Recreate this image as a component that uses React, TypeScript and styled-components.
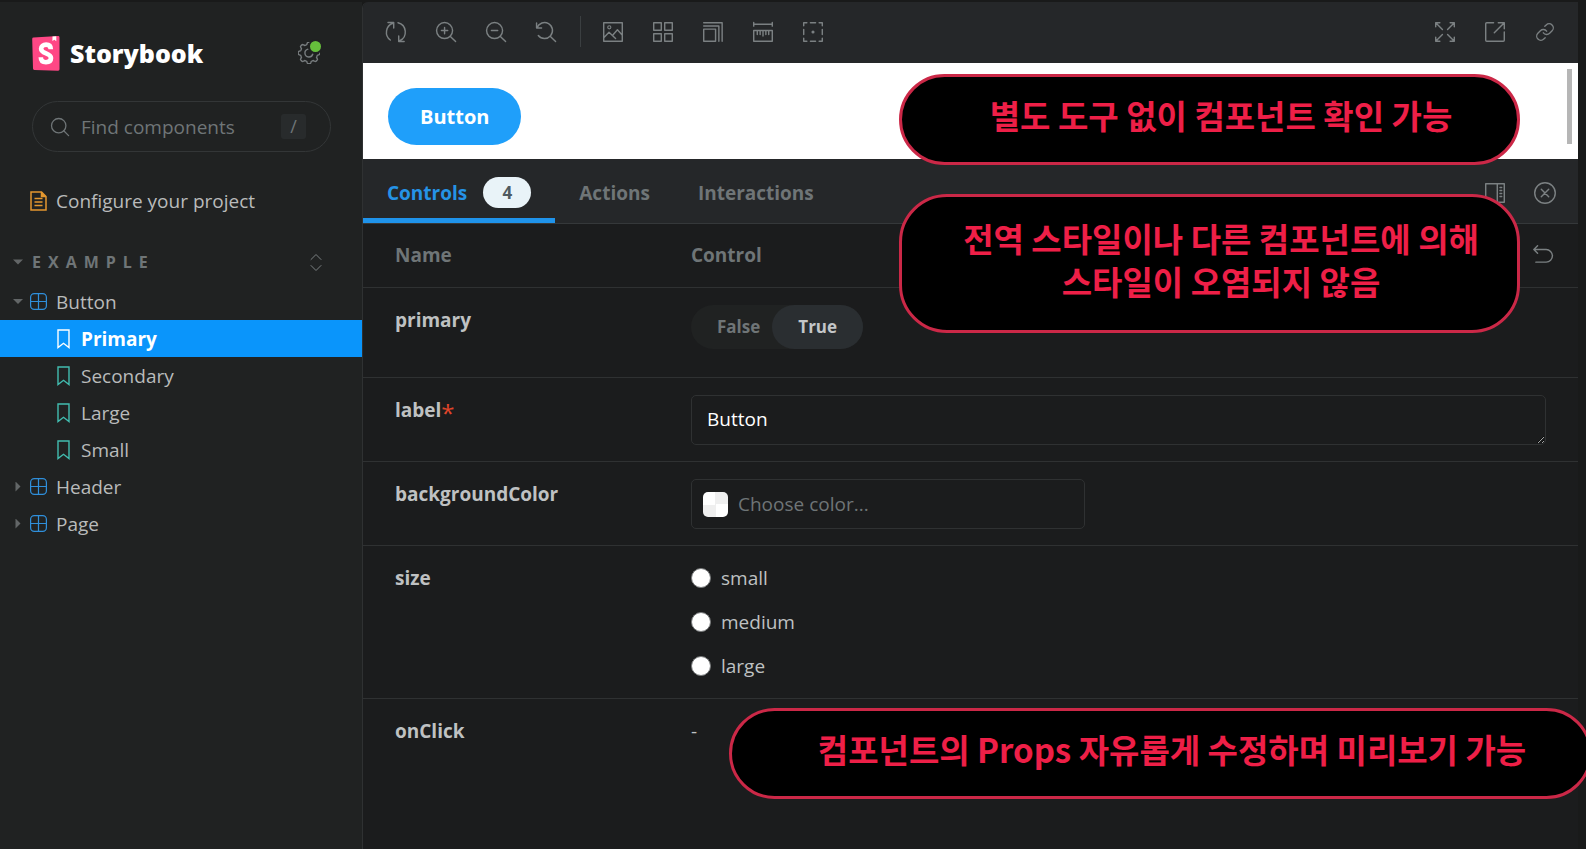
import React, { useState } from 'react';
import styled, { createGlobalStyle, css } from 'styled-components';
import { Link as LinkIcon } from 'lucide-react';

const colors = {
  frame: '#191a1a',
  sidebar: '#202222',
  bar: '#252729',
  content: '#1b1c1d',
  line: '#2f3132',
  text: '#bfc1c2',
  muted: '#6f7577',
  accent: '#0a95fb',
  note: '#ee1f47',
};

const Global = createGlobalStyle`
  * { box-sizing: border-box; }
  body { margin: 0; background: ${colors.frame}; overflow-x: hidden; }
  body, button, input, textarea {
    font-family: "Open Sans", "Noto Sans CJK KR", sans-serif;
    font-size: 19px;
    line-height: 30px;
  }
  button, input, textarea, ul, h1 { margin: 0; padding: 0; }
  button { border: 0; background: none; cursor: pointer; }
`;

const Page = styled.div`
  position: relative;
  display: grid;
  grid-template-columns: 362px minmax(0, 1fr);
  min-height: 100vh;
  padding: 2px 8px 0 0;
  overflow: hidden;
`;

/* Sidebar */

const Sidebar = styled.aside`
  background: ${colors.sidebar};
  color: ${colors.text};
`;

const Brand = styled.header`
  display: flex;
  align-items: center;
  padding: 32px 42px 0 32px;
`;

const BrandName = styled.h1`
  flex: 1;
  margin-left: 10px;
  font-size: 25px;
  line-height: 38px;
  font-weight: 800;
  color: #fff;
`;

const SettingsButton = styled.button`
  position: relative;
  display: flex;
  color: #777c7e;
`;

const UpdateDot = styled.span`
  position: absolute;
  top: -3px;
  right: -3px;
  width: 15px;
  height: 15px;
  border: 2px solid ${colors.sidebar};
  border-radius: 50%;
  background: #66bf3c;
`;

const SearchBox = styled.label`
  display: flex;
  align-items: center;
  height: 51px;
  margin: 29px 31px 0 32px;
  padding: 0 24px 0 18px;
  border: 1px solid #333637;
  border-radius: 26px;
  color: ${colors.muted};

  input {
    flex: 1;
    min-width: 0;
    margin-left: 12px;
    border: 0;
    outline: 0;
    background: none;
    color: ${colors.text};
  }
  input::placeholder { color: ${colors.muted}; opacity: 1; }
`;

const Key = styled.kbd`
  width: 25px;
  height: 25px;
  border-radius: 3px;
  background: #282b2c;
  font: 18px/25px "Open Sans", sans-serif;
  text-align: center;
`;

const Nav = styled.nav`
  padding-top: 30px;
`;

const NavLink = styled.a<{ $active?: boolean; $depth?: number }>`
  display: flex;
  align-items: center;
  height: 37px;
  padding-left: ${({ $depth = 0 }) => ($depth ? 54 : 13)}px;
  color: ${({ $active }) => ($active ? '#fff' : '#b9bbbb')};
  font-weight: ${({ $active }) => ($active ? 700 : 400)};
  background: ${({ $active }) => ($active ? colors.accent : 'transparent')};
  text-decoration: none;

  svg { flex: none; }
`;

const Caret = styled.span<{ $open?: boolean; $hidden?: boolean }>`
  width: 10px;
  height: 10px;
  margin-right: 6px;
  background: ${({ $hidden }) => ($hidden ? 'transparent' : '#626667')};
  clip-path: ${({ $open }) =>
    $open ? 'polygon(0 25%, 100% 25%, 50% 75%)' : 'polygon(25% 0, 75% 50%, 25% 100%)'};
`;

const ItemIcon = styled.span<{ $tone: 'doc' | 'component' | 'story' | 'active' }>`
  display: flex;
  width: 18px;
  margin-right: 9px;
  justify-content: center;
  color: ${({ $tone }) =>
    ({ doc: '#e3972f', component: '#2f8fdb', story: '#42bdb0', active: '#fff' })[$tone]};
`;

const SectionRow = styled.div`
  display: flex;
  align-items: center;
  margin-top: 22px;
  height: 42px;
  padding: 0 40px 0 13px;
  color: ${colors.muted};
`;

const SectionToggle = styled.button`
  display: flex;
  flex: 1;
  align-items: center;
  color: inherit;
  font-size: 16px;
  font-weight: 700;
  letter-spacing: 7px;

  ${Caret} { margin-right: 9px; }
`;

const IconOnly = styled.button`
  display: flex;
  align-items: center;
  justify-content: center;
  color: #7b8082;
`;

/* Main area */

const Main = styled.main`
  display: flex;
  flex-direction: column;
  min-width: 0;
  border-left: 1px solid ${colors.line};
  border-top-left-radius: 6px;
  overflow: hidden;
  background: ${colors.content};
`;

const Toolbar = styled.div`
  display: flex;
  align-items: center;
  gap: 30px;
  height: 61px;
  padding: 0 23px 2px;
  background: ${colors.bar};
`;

const Separator = styled.span`
  width: 1px;
  height: 31px;
  margin: 0 -8px 0 -6px;
  background: #3b3f41;
`;

const Spacer = styled.span`
  flex: 1;
`;

const Canvas = styled.section`
  display: flex;
  align-items: flex-start;
  justify-content: space-between;
  height: 96px;
  padding: 6px 6px 0 25px;
  background: #fff;
`;

const PreviewButton = styled.button`
  height: 57px;
  margin-top: 19px;
  padding: 0 32px;
  border-radius: 29px;
  background: #1f9ffa;
  color: #fff;
  font-size: 20px;
  font-weight: 700;
`;

const ScrollThumb = styled.span`
  width: 5px;
  height: 75px;
  background: #b6b6b6;
`;

const Tabs = styled.div`
  display: flex;
  align-items: stretch;
  height: 65px;
  padding-right: 23px;
  border-bottom: 1px solid #35383a;
  background: ${colors.bar};
`;

const Tab = styled.button<{ $active?: boolean }>`
  display: flex;
  align-items: center;
  gap: 16px;
  padding: 8px 24px 0;
  border-bottom: 5px solid transparent;
  color: ${colors.muted};
  font-weight: 700;
  ${({ $active }) =>
    $active &&
    css`
      color: #2593e6;
      border-bottom-color: #1f93ea;
    `}
`;

const Count = styled.span`
  width: 48px;
  height: 31px;
  border-radius: 16px;
  background: #e9f3f8;
  color: #4f5a60;
  font-size: 17px;
  line-height: 31px;
`;

const TabTools = styled.div`
  display: flex;
  gap: 30px;
  margin-left: auto;
  padding-top: 3px;
`;

const ArgsTable = styled.table`
  width: 100%;
  border-collapse: collapse;
  table-layout: fixed;
  color: ${colors.text};

  th, td {
    padding: 17px 32px 16px 0;
    text-align: left;
    vertical-align: top;
  }
  th:first-child {
    width: 328px;
    padding-left: 32px;
    font-weight: 700;
  }
  thead th {
    padding-top: 16px;
    padding-bottom: 17px;
    color: ${colors.muted};
    font-weight: 700;
  }
  tbody tr { border-top: 1px solid ${colors.line}; }
`;

const HeadCell = styled.div`
  display: flex;
  justify-content: space-between;
  align-items: center;
  margin-right: -7px;
`;

const Required = styled.span`
  color: #e0452a;
  font-size: 24px;
  font-weight: 400;
  line-height: 0;
  vertical-align: -5px;
`;

const Toggle = styled.div`
  display: inline-flex;
  height: 44px;
  margin-bottom: 12px;
  border-radius: 22px;
  background: #202222;
  vertical-align: top;
`;

const ToggleOption = styled.button<{ $on?: boolean }>`
  padding: 0 ${({ $on }) => ($on ? 26 : 12)}px 0 26px;
  border-radius: 22px;
  font-size: 17px;
  font-weight: 700;
  color: ${({ $on }) => ($on ? '#c3c6c8' : colors.muted)};
  background: ${({ $on }) => ($on ? '#2a2e31' : 'transparent')};
`;

const TextValue = styled.textarea`
  display: block;
  width: 100%;
  height: 50px;
  padding: 8px 15px;
  border: 1px solid ${colors.line};
  border-radius: 5px;
  outline: 0;
  background: ${colors.content};
  color: #fff;
  resize: vertical;
  overflow: hidden;
`;

const ColorField = styled.div`
  display: flex;
  align-items: center;
  width: 394px;
  max-width: 100%;
  height: 50px;
  padding: 0 11px;
  border: 1px solid ${colors.line};
  border-radius: 5px;

  input {
    flex: 1;
    min-width: 0;
    margin-left: 10px;
    border: 0;
    outline: 0;
    background: none;
    color: #fff;
  }
  input::placeholder { color: ${colors.muted}; opacity: 1; }
`;

const Swatch = styled.button`
  width: 25px;
  height: 25px;
  border-radius: 5px;
  background: repeating-conic-gradient(#efefef 0 25%, #fff 0 50%);
`;

const Options = styled.div`
  display: flex;
  flex-direction: column;
  gap: 14px;
  padding-bottom: 1px;
`;

const Option = styled.label`
  display: flex;
  align-items: center;
  gap: 10px;

  input {
    appearance: none;
    width: 20px;
    height: 20px;
    border: 1px solid #77797a;
    border-radius: 50%;
    background: #fff;
  }
  input:checked { border: 6px solid ${colors.accent}; }
`;

/* Annotations laid over the app */

const Callout = styled.p<{ $top: number; $right: number; $width: number; $tall?: boolean }>`
  position: absolute;
  top: ${({ $top }) => $top}px;
  right: ${({ $right }) => $right}px;
  width: ${({ $width }) => $width}px;
  margin: 0;
  padding: ${({ $tall }) => ($tall ? '20px 0 27px 23px' : '17px 0 25px 23px')};
  border: 3px solid #cb2847;
  border-radius: 48px;
  background: #000;
  color: ${colors.note};
  font: 700 33px/43px "Noto Sans CJK KR", sans-serif;
  text-align: center;
  white-space: nowrap;
`;

type GlyphProps = { d?: string; size?: number; children?: React.ReactNode };

const Glyph = ({ d, size = 20, children }: GlyphProps) => (
  <svg
    width={size}
    height={size}
    viewBox="0 0 14 14"
    fill="none"
    stroke="currentColor"
    strokeLinecap="round"
    strokeLinejoin="round"
    overflow="visible"
    aria-hidden="true"
  >
    {d && <path d={d} />}
    {children}
  </svg>
);

const SyncGlyph = () => (
  <Glyph d="M3 12.600A6.700 6.700 0 0 1 4.800.9M1.400.4h4v3.800M8.400.5a6.700 6.700 0 0 1 1.200 12.600M12.700 13.600H8.900V9.800" />
);
const ZoomGlyph = ({ d }: { d?: string }) => (
  <Glyph d={`M9.9 9.9 13.7 13.7${d ?? ''}`}>
    <circle cx="6" cy="6" r="5.6" />
  </Glyph>
);
const ResetGlyph = () => (
  <Glyph d="M.4.7v3.5h3.5M.7 4A5.6 5.6 0 1 1 1.6 9.5M9.9 9.9l3.8 3.8" />
);
const PhotoGlyph = () => (
  <Glyph d="M.5.5h13v13H.5zM.7 10.8l3.5-3.6 4.6 4.3M6.6 9.4l3.5-4 3.3 3.7">
    <circle cx="4.4" cy="3.7" r="1.1" strokeWidth=".8" />
  </Glyph>
);
const GridGlyph = () => (
  <Glyph d="M.5.5h5.3v5.3H.5zM8.2.5h5.3v5.3H8.2zM.5 8.2h5.3v5.3H.5zM8.2 8.2h5.3v5.3H8.2z" />
);
const ViewportGlyph = () => <Glyph d="M.5 5h8.3v8.5H.5zM.5 2.8h10.6v10.7M.5.5h12.9v13" />;
const RulerGlyph = () => (
  <Glyph d="M.5.3v2.6M13.5.3v2.6M.5 1.6h13M.5 6h13v7.5H.5zM3 6.5v2.3M5 6.5v2.3M7 6.5v3.3M9 6.5v2.3M11 6.5v2.3" />
);
const OutlineGlyph = () => (
  <Glyph d="M.5 2.7V.5h2.2M5.2.5h3.6M11.3.5h2.2v2.2M13.5 5.2v3.6M13.5 11.3v2.2h-2.2M8.8 13.5H5.2M2.7 13.5H.5v-2.2M.5 8.8V5.2">
    <circle cx="7" cy="7" r=".6" fill="currentColor" />
  </Glyph>
);
const ExpandGlyph = () => (
  <Glyph d="M.5 3.4V.5h2.9M.5.5l4.7 4.7M10.6.5h2.9v2.9M13.5.5 8.8 5.2M.5 10.6v2.9h2.9M.5 13.5l4.7-4.7M10.6 13.5h2.9v-2.9M13.5 13.5 8.8 8.8" />
);
const ShareGlyph = () => (
  <Glyph d="M6 .5H1.2a.7.7 0 0 0-.7.7v11.6c0 .4.3.7.7.7h11.6c.4 0 .7-.3.7-.7V7M9.3.5h4.2v4.2M13.5.5l-7 7" />
);
const PanelGlyph = () => (
  <Glyph d="M.5.5h13v13H.5zM8.6.5v13M10.5 3.2h1.2M10.5 5.3h1.2M10.5 7.4h1.2M10.5 9.5h1.2" />
);
const CloseGlyph = () => (
  <Glyph d="M4.4 4.4l5.2 5.2M9.6 4.4 4.4 9.6">
    <circle cx="7" cy="7" r="7.2" />
  </Glyph>
);
const UndoGlyph = () => <Glyph d="M3.2.6.6 3.2l2.6 2.6M.8 3.2h8.4a4.400 4.400 0 0 1 0 8.800H2" />;
const SearchGlyph = () => (
  <Glyph size={18} d="M9.9 9.9 13.7 13.7">
    <circle cx="6" cy="6" r="5.6" />
  </Glyph>
);
const CollapseGlyph = () => (
  <svg width="12" height="19" viewBox="0 0 12 19" fill="none" stroke="currentColor" aria-hidden="true">
    <path d="M1 6.5 6 1.5l5 5M1 12.5l5 5 5-5" strokeLinecap="round" />
  </svg>
);
const ComponentGlyph = () => (
  <Glyph size={17} d="M7 .5v13M.5 7h13">
    <rect x=".5" y=".5" width="13" height="13" rx="3" />
  </Glyph>
);
const DocGlyph = () => (
  <svg width="17" height="20" viewBox="0 0 17 20" fill="none" stroke="currentColor" strokeWidth="1.5" aria-hidden="true">
    <path d="M1 1h10.5L16 5.5V19H1zM4.5 7.5h8M4.5 11h8M4.5 14.5h8" />
    <path d="M11.5 1v4.5H16" fill="currentColor" />
  </svg>
);
const BookmarkGlyph = () => (
  <svg width="13" height="20" viewBox="0 0 13 20" fill="none" stroke="currentColor" strokeWidth="1.4" aria-hidden="true">
    <path d="M1 1h11v17.5l-5.5-4.2L1 18.5z" />
  </svg>
);

const gearPath = (() => {
  const points: string[] = [];
  for (let i = 0; i <= 96; i++) {
    const a = (i / 96) * Math.PI * 2;
    const r = 9.7 + 1.1 * Math.tanh(3 * Math.cos(8 * a));
    points.push(`${(11 + r * Math.cos(a)).toFixed(2)} ${(11 + r * Math.sin(a)).toFixed(2)}`);
  }
  return `M${points.join('L')}Z`;
})();

const GearGlyph = () => (
  <svg width="22" height="22" viewBox="0 0 22 22" fill="none" stroke="currentColor" strokeWidth="1.4" aria-hidden="true">
    <path d={gearPath} />
    <path d="M10 7.1a4 4 0 1 0 4.8 4.9" strokeLinecap="round" />
  </svg>
);

const Logo = () => (
  <svg width="28" height="35" viewBox="0 0 28 35" aria-hidden="true">
    <path d="M1.6 1.6 26 .1a1.4 1.4 0 0 1 1.5 1.4v31.8a1.4 1.4 0 0 1-1.5 1.4L2.4 33.9A1.4 1.4 0 0 1 1 32.5L.2 3.1a1.4 1.4 0 0 1 1.4-1.5z" fill="#ff4785" />
    <path d="M20.5.5 24.3.2v5L22.4 3.8l-2 1.2z" fill="#fff" />
    <path
      d="M18.8 13.2C18.8 9.9 17 8.600 14.100 8.600s-5 1.600-5 4.100c0 5.400 9.900 4 9.900 9.400 0 2.600-1.900 4.100-5 4.100s-5.200-1.600-5.200-4.900"
      fill="none"
      stroke="#fff"
      strokeWidth="4.6"
    />
  </svg>
);

const tools = [
  { label: 'Remount component', icon: <SyncGlyph /> },
  { label: 'Zoom in', icon: <ZoomGlyph d="M6 3.8v4.4M3.8 6h4.4" /> },
  { label: 'Zoom out', icon: <ZoomGlyph d="M3.8 6h4.4" /> },
  { label: 'Reset zoom', icon: <ResetGlyph /> },
];
const addons = [
  { label: 'Change background', icon: <PhotoGlyph /> },
  { label: 'Apply grid', icon: <GridGlyph /> },
  { label: 'Change viewport', icon: <ViewportGlyph /> },
  { label: 'Measure', icon: <RulerGlyph /> },
  { label: 'Outline', icon: <OutlineGlyph /> },
];
const links = [
  { label: 'Full screen', icon: <ExpandGlyph /> },
  { label: 'Open in new tab', icon: <ShareGlyph /> },
  { label: 'Copy link', icon: <LinkIcon size={22} strokeWidth={1.5} absoluteStrokeWidth /> },
];

const ToolButton = styled(IconOnly)`
  width: 20px;
`;

const ToolButtons = ({ items }: { items: typeof tools }) => (
  <>
    {items.map(({ label, icon }) => (
      <ToolButton key={label} aria-label={label}>
        {icon}
      </ToolButton>
    ))}
  </>
);

const stories = ['Primary', 'Secondary', 'Large', 'Small'];

const ComponentItem = ({ name, open }: { name: string; open?: boolean }) => (
  <NavLink href="#">
    <Caret $open={open} />
    <ItemIcon $tone="component">
      <ComponentGlyph />
    </ItemIcon>
    {name}
  </NavLink>
);

export default function App() {
  const [label, setLabel] = useState('Button');
  const [primary, setPrimary] = useState(true);

  return (
    <>
      <Global />
      <Page>
        <Sidebar>
          <Brand>
            <Logo />
            <BrandName>Storybook</BrandName>
            <SettingsButton aria-label="Settings">
              <GearGlyph />
              <UpdateDot />
            </SettingsButton>
          </Brand>
          <SearchBox>
            <SearchGlyph />
            <input type="text" placeholder="Find components" aria-label="Find components" />
            <Key>/</Key>
          </SearchBox>
          <Nav>
            <NavLink href="#">
              <Caret $hidden />
              <ItemIcon $tone="doc">
                <DocGlyph />
              </ItemIcon>
              Configure your project
            </NavLink>
            <SectionRow>
              <SectionToggle>
                <Caret $open />
                EXAMPLE
              </SectionToggle>
              <IconOnly aria-label="Collapse all">
                <CollapseGlyph />
              </IconOnly>
            </SectionRow>
            <ComponentItem name="Button" open />
            {stories.map((story, i) => (
              <NavLink key={story} href="#" $depth={1} $active={i === 0}>
                <ItemIcon $tone={i === 0 ? 'active' : 'story'}>
                  <BookmarkGlyph />
                </ItemIcon>
                {story}
              </NavLink>
            ))}
            <ComponentItem name="Header" />
            <ComponentItem name="Page" />
          </Nav>
        </Sidebar>

        <Main>
          <Toolbar>
            <ToolButtons items={tools} />
            <Separator />
            <ToolButtons items={addons} />
            <Spacer />
            <ToolButtons items={links} />
          </Toolbar>
          <Canvas>
            <PreviewButton>{label}</PreviewButton>
            <ScrollThumb />
          </Canvas>
          <Tabs>
            <Tab $active>
              Controls <Count>4</Count>
            </Tab>
            <Tab>Actions</Tab>
            <Tab>Interactions</Tab>
            <TabTools>
              <IconOnly aria-label="Change addon orientation">
                <PanelGlyph />
              </IconOnly>
              <IconOnly aria-label="Hide addons">
                <CloseGlyph />
              </IconOnly>
            </TabTools>
          </Tabs>
          <ArgsTable>
            <thead>
              <tr>
                <th>Name</th>
                <th>
                  <HeadCell>
                    Control
                    <IconOnly aria-label="Reset controls">
                      <UndoGlyph />
                    </IconOnly>
                  </HeadCell>
                </th>
              </tr>
            </thead>
            <tbody>
              <tr>
                <th>primary</th>
                <td>
                  <Toggle>
                    <ToggleOption $on={!primary} onClick={() => setPrimary(false)}>
                      False
                    </ToggleOption>
                    <ToggleOption $on={primary} onClick={() => setPrimary(true)}>
                      True
                    </ToggleOption>
                  </Toggle>
                </td>
              </tr>
              <tr>
                <th>
                  <label htmlFor="label">label</label>
                  <Required>*</Required>
                </th>
                <td>
                  <TextValue id="label" rows={1} value={label} onChange={(e) => setLabel(e.target.value)} />
                </td>
              </tr>
              <tr>
                <th>
                  <label htmlFor="color">backgroundColor</label>
                </th>
                <td>
                  <ColorField>
                    <Swatch aria-label="Pick a color" />
                    <input id="color" type="text" placeholder="Choose color..." />
                  </ColorField>
                </td>
              </tr>
              <tr>
                <th>size</th>
                <td>
                  <Options>
                    {['small', 'medium', 'large'].map((size) => (
                      <Option key={size}>
                        <input type="radio" name="size" value={size} />
                        {size}
                      </Option>
                    ))}
                  </Options>
                </td>
              </tr>
              <tr>
                <th>onClick</th>
                <td>-</td>
              </tr>
            </tbody>
          </ArgsTable>
        </Main>

        <Callout $top={74} $right={66} $width={621}>
          별도 도구 없이 컴포넌트 확인 가능
        </Callout>
        <Callout $top={194} $right={66} $width={621} $tall>
          전역 스타일이나 다른 컴포넌트에 의해
          <br />
          스타일이 오염되지 않음
        </Callout>
        <Callout $top={708} $right={-6} $width={863}>
          컴포넌트의 Props 자유롭게 수정하며 미리보기 가능
        </Callout>
      </Page>
    </>
  );
}
